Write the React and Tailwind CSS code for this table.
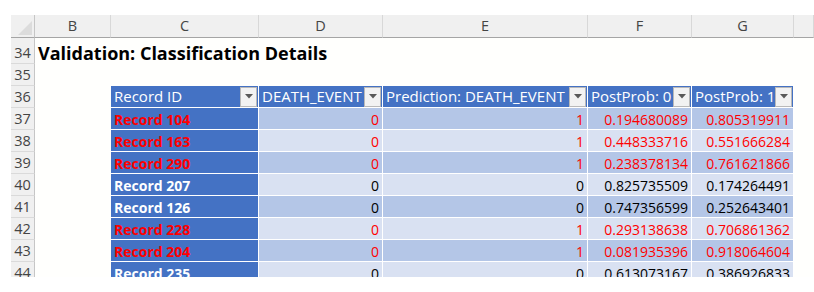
import React from 'react';

const rows = [
    { n: 37, id: 'Record 104', d: '0', p: '1', f: '0.194680089', g: '0.805319911', red: true },
    { n: 38, id: 'Record 163', d: '0', p: '1', f: '0.448333716', g: '0.551666284', red: true },
    { n: 39, id: 'Record 290', d: '0', p: '1', f: '0.238378134', g: '0.761621866', red: true },
    { n: 40, id: 'Record 207', d: '0', p: '0', f: '0.825735509', g: '0.174264491', red: false },
    { n: 41, id: 'Record 126', d: '0', p: '0', f: '0.747356599', g: '0.252643401', red: false },
    { n: 42, id: 'Record 228', d: '0', p: '1', f: '0.293138638', g: '0.706861362', red: true },
    { n: 43, id: 'Record 204', d: '0', p: '1', f: '0.081935396', g: '0.918064604', red: true },
    { n: 44, id: 'Record 235', d: '0', p: '0', f: '0.613073167', g: '0.386926833', red: false },
];

function RowNum({ n, tall }) {
    return (
        <div className={`flex items-center justify-center bg-[#f0f0f0] border-r border-b border-r-[#c6c6c6] border-b-[#dadada] text-[14.5px] text-[#444] ${tall ? 'pt-[4px]' : ''}`}>
            {n}
        </div>
    );
}

// little filter button of the excel table header
function Dropdown() {
    return (
        <div className="w-[17px] h-[20px] shrink-0 flex items-center justify-center bg-[#f2f2f2] border border-[#b9b9b9]">
            <svg width="8" height="5" viewBox="0 0 8 5">
                <path d="M0 0h8L4 4.5z" fill="#595959" />
            </svg>
        </div>
    );
}

function HeadCell({ label }) {
    return (
        <div className="flex items-center justify-between bg-[#4472c4] border-r border-b border-white pl-[3px] pr-[1px] text-[15px] text-white whitespace-nowrap overflow-hidden">
            <span>{label}</span>
            <Dropdown />
        </div>
    );
}

export default function App() {
    const letters = ['B', 'C', 'D', 'E', 'F', 'G', ''];

    return (
        <div className="w-[814px] h-[292px] bg-white pt-[15px] pl-[11px] overflow-hidden" style={{ fontFamily: '"Open Sans", "Noto Sans", sans-serif' }}>
            <div className="h-[262px] overflow-hidden bg-[#fffffd]">
                <div className="grid grid-cols-[24px_76px_148px_124px_205px_104px_102px_1fr] grid-rows-[23px_26px_22px_repeat(9,22px)]">
                    {/* column letters */}
                    <div className="relative bg-[#f0f0f0] border-r border-b border-r-[#c6c6c6] border-b-[#a5a5a5]">
                        <svg className="absolute right-[2px] bottom-[2px]" width="14" height="14" viewBox="0 0 14 14">
                            <path d="M14 0v14H0z" fill="#dcdcdc" />
                        </svg>
                    </div>
                    {letters.map((l, i) => (
                        <div key={i} className="flex items-center justify-center bg-[#f0f0f0] border-r border-b border-r-[#d8d8d8] border-b-[#a5a5a5] text-[14.5px] text-[#444]">
                            {l}
                        </div>
                    ))}

                    {/* row 34 - title */}
                    <RowNum n={34} tall />
                    <div className="col-span-7 flex items-center pl-[3px] pt-[4px] text-[18px] font-bold text-black whitespace-nowrap">
                        Validation: Classification Details
                    </div>

                    {/* row 35 */}
                    <RowNum n={35} />
                    <div className="col-span-7" />

                    {/* row 36 - table header */}
                    <RowNum n={36} />
                    <div />
                    <HeadCell label="Record ID" />
                    <HeadCell label="DEATH_EVENT" />
                    <HeadCell label="Prediction: DEATH_EVENT" />
                    <HeadCell label="PostProb: 0" />
                    <HeadCell label="PostProb: 1" />
                    <div />

                    {rows.map((r, i) => {
                        const band = i % 2 === 0 ? 'bg-[#b4c6e7]' : 'bg-[#d9e1f2]';
                        const txt = r.red ? 'text-[#ff0000]' : 'text-black';
                        const num = `flex items-center justify-end pr-[3px] pt-[2px] border-r border-b border-white text-[14px] ${band} ${txt}`;
                        return (
                            <React.Fragment key={r.n}>
                                <RowNum n={r.n} />
                                <div />
                                <div className={`flex items-center pl-[3px] pt-[2px] bg-[#4472c4] border-r border-b border-white text-[14px] font-bold ${r.red ? 'text-[#ff0000]' : 'text-white'}`}>
                                    {r.id}
                                </div>
                                <div className={num}>{r.d}</div>
                                <div className={num}>{r.p}</div>
                                <div className={num}>{r.f}</div>
                                <div className={num}>{r.g}</div>
                                <div />
                            </React.Fragment>
                        );
                    })}
                </div>
            </div>
        </div>
    );
}
